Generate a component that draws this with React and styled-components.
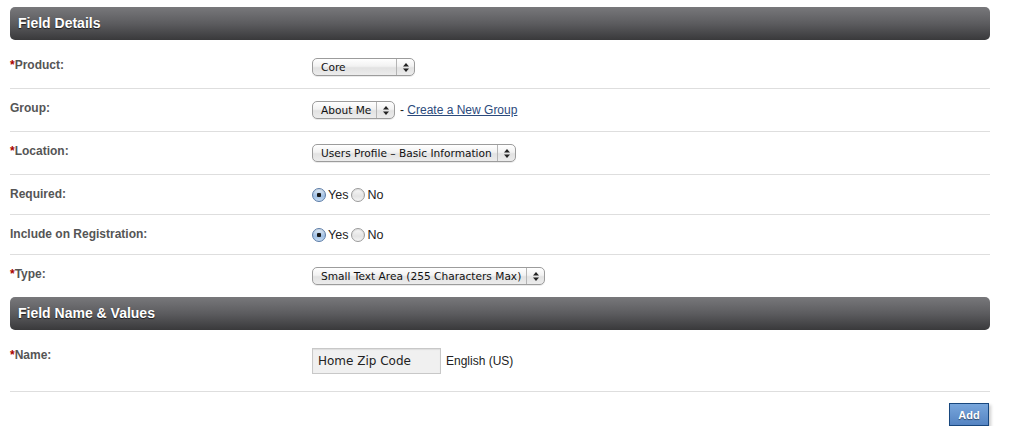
import React from "react";
import styled, { createGlobalStyle } from "styled-components";

const Global = createGlobalStyle`
  html, body { margin: 0; padding: 0; background: #fff; }
  body { font-family: "Liberation Sans", Arial, sans-serif; }
`;

const Page = styled.div`
  padding: 7px 32px 0 10px;
  width: 980px;
`;

const SectionHeader = styled.div`
  height: 33px;
  border-radius: 5px;
  background: linear-gradient(#78787b 0%, #5c5c5f 50%, #39393b 100%);
  color: #fff;
  font: bold 14px "Liberation Sans", Arial, sans-serif;
  line-height: 33px;
  padding-left: 8px;
  text-shadow: 0 1px 1px rgba(0, 0, 0, 0.7);
`;

const Section = styled.div`
  margin-top: 6px;
`;

const Row = styled.div`
  display: grid;
  grid-template-columns: 302px 1fr;
  padding: 12px 0 ${(p) => p.$pb || 12}px;
  border-bottom: ${(p) => (p.$noBorder ? "none" : "1px solid #dedede")};
`;

const Label = styled.div`
  font: bold 12px "Liberation Sans", Arial, sans-serif;
  color: #555;
  line-height: 15px;
`;

const Req = styled.span`
  color: #a00;
`;

const Value = styled.div`
  display: flex;
  align-items: center;
  gap: 5px;
  font: 12px "Liberation Sans", Arial, sans-serif;
  color: #222;
  height: ${(p) => p.$h || 18}px;
`;

const SelectBox = styled.div`
  box-sizing: border-box;
  width: ${(p) => p.$w}px;
  height: 18px;
  display: flex;
  align-items: stretch;
  border: 1px solid #9c9c9c;
  border-radius: 5px;
  background: linear-gradient(#ffffff 0%, #f2f2f2 45%, #e2e2e2 55%, #ececec 100%);
  box-shadow: 0 1px 0 rgba(0, 0, 0, 0.08);
  font: 10.6px "DejaVu Sans", "Liberation Sans", sans-serif;
  color: #111;
`;

const SelectText = styled.div`
  flex: 1;
  padding-left: 8px;
  line-height: 16px;
  white-space: nowrap;
  overflow: hidden;
`;

const SelectArrows = styled.div`
  width: 17px;
  flex: none;
  border-left: 1px solid #b5b5b5;
  display: flex;
  align-items: center;
  justify-content: center;
`;

const Select = ({ w, children }) => (
  <SelectBox $w={w}>
    <SelectText>{children}</SelectText>
    <SelectArrows>
      <svg width="6" height="9" viewBox="0 0 6 9">
        <path d="M3 0 L6 3.5 L0 3.5 Z" fill="#222" />
        <path d="M3 9 L6 5.5 L0 5.5 Z" fill="#222" />
      </svg>
    </SelectArrows>
  </SelectBox>
);

const Link = styled.a`
  color: #2b4a7c;
  text-decoration: underline;
  cursor: pointer;
`;

const RadioGroup = styled.div`
  display: flex;
  align-items: center;
  gap: 3px;
  font-size: 12.5px;
`;

const RadioItem = styled.label`
  display: flex;
  align-items: center;
  gap: 2px;
`;

const RadioDot = styled.span`
  box-sizing: border-box;
  width: 14px;
  height: 14px;
  border-radius: 50%;
  border: 1px solid ${(p) => (p.$on ? "#5a7ba6" : "#9a9a9a")};
  background: ${(p) =>
    p.$on
      ? "radial-gradient(circle at 50% 50%, #1a1a1a 0 2px, transparent 2.5px), linear-gradient(#e4eef9, #9fbfe4 60%, #c6dcf3)"
      : "linear-gradient(#f8f8f8, #e3e3e3 60%, #f4f4f4)"};
  box-shadow: inset 0 1px 1px rgba(0, 0, 0, 0.1);
`;

const Radio = ({ on, children }) => (
  <RadioItem>
    <RadioDot $on={on} />
    {children}
  </RadioItem>
);

const TextInput = styled.div`
  box-sizing: border-box;
  width: 129px;
  height: 26px;
  border: 1px solid #c8c8c8;
  background: #f0f0f0;
  font: 12px "DejaVu Sans", "Liberation Sans", sans-serif;
  color: #222;
  line-height: 24px;
  padding-left: 5px;
  box-shadow: inset 0 1px 1px rgba(0, 0, 0, 0.08);
`;

const Footer = styled.div`
  display: flex;
  justify-content: flex-end;
  padding: 11px 1px 0 0;
`;

const AddButton = styled.button`
  width: 40px;
  height: 23px;
  border: 1px solid #18477e;
  background: linear-gradient(#78a6dc, #5584c2);
  color: #fff;
  font: bold 11px "Liberation Sans", Arial, sans-serif;
  text-shadow: 0 1px 1px rgba(0, 0, 0, 0.5);
  box-shadow: 2px 2px 3px rgba(0, 0, 0, 0.2);
  padding: 0;
  cursor: pointer;
`;

export default function App() {
  return (
    <>
      <Global />
      <Page>
        <SectionHeader>Field Details</SectionHeader>
        <Section>
          <Row>
            <Label><Req>*</Req>Product:</Label>
            <Value><Select w={103}>Core</Select></Value>
          </Row>
          <Row>
            <Label>Group:</Label>
            <Value>
              <Select w={83}>About Me</Select>
              <span>- <Link>Create a New Group</Link></span>
            </Value>
          </Row>
          <Row>
            <Label><Req>*</Req>Location:</Label>
            <Value><Select w={204}>Users Profile – Basic Information</Select></Value>
          </Row>
          <Row>
            <Label>Required:</Label>
            <Value $h={15}>
              <RadioGroup>
                <Radio on>Yes</Radio>
                <Radio>No</Radio>
              </RadioGroup>
            </Value>
          </Row>
          <Row>
            <Label>Include on Registration:</Label>
            <Value $h={15}>
              <RadioGroup>
                <Radio on>Yes</Radio>
                <Radio>No</Radio>
              </RadioGroup>
            </Value>
          </Row>
          <Row $noBorder>
            <Label><Req>*</Req>Type:</Label>
            <Value><Select w={233}>Small Text Area (255 Characters Max)</Select></Value>
          </Row>
        </Section>
        <SectionHeader>Field Name &amp; Values</SectionHeader>
        <Section>
          <Row $pb={17}>
            <Label><Req>*</Req>Name:</Label>
            <Value $h={26}>
              <TextInput>Home Zip Code</TextInput>
              <span>English (US)</span>
            </Value>
          </Row>
        </Section>
        <Footer>
          <AddButton>Add</AddButton>
        </Footer>
      </Page>
    </>
  );
}
